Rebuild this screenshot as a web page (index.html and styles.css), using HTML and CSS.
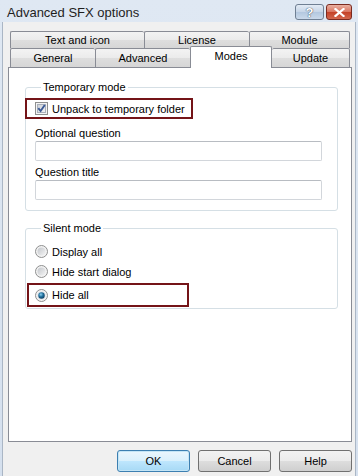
FILE: index.html
```html
<!DOCTYPE html>
<html lang="en">
<head>
    <meta charset="UTF-8">
    <title>Advanced SFX options</title>
    <link rel="stylesheet" href="styles.css">
</head>
<body>
    <div class="window">
        <div class="titlebar">
            <span class="title">Advanced SFX options</span>
            <div class="caption-buttons">
                <span class="cap cap-help">?</span>
                <span class="cap cap-close">
                    <svg width="11" height="9" viewBox="0 0 11 9"><path d="M1.5 1 L9.5 8 M9.5 1 L1.5 8" stroke="#fff" stroke-width="2.2" stroke-linecap="square"/></svg>
                </span>
            </div>
        </div>
        <div class="client">
            <div class="tabs">
                <div class="tab-row">
                    <span class="tab tab-text">Text and icon</span>
                    <span class="tab tab-license">License</span>
                    <span class="tab tab-module last">Module</span>
                </div>
                <div class="tab-row front">
                    <span class="tab tab-general">General</span>
                    <span class="tab tab-advanced">Advanced</span>
                    <span class="tab tab-modes active">Modes</span>
                    <span class="tab tab-update last">Update</span>
                </div>
            </div>
            <div class="panel">
                <fieldset class="group group-temp">
                    <legend>Temporary mode</legend>
                    <div class="mark mark-check">
                        <svg class="checkbox" width="13" height="13" viewBox="0 0 13 13">
                            <defs>
                                <linearGradient id="cbg" x1="0" y1="0" x2="1" y2="1">
                                    <stop offset="0" stop-color="#cbcfd5"/>
                                    <stop offset="1" stop-color="#f6f6f6"/>
                                </linearGradient>
                            </defs>
                            <rect x="0.5" y="0.5" width="12" height="12" fill="#f4f4f4" stroke="#8e8f8f"/>
                            <rect x="2.5" y="2.5" width="8" height="8" fill="url(#cbg)" stroke="#a9b0bb"/>
                            <path d="M3.3 6.2 L5.6 9 L9.8 3" fill="none" stroke="#3b5a96" stroke-width="1.9"/>
                        </svg>
                        <span>Unpack to temporary folder</span>
                    </div>
                    <label class="field-label">Optional question</label>
                    <input class="field" type="text">
                    <label class="field-label">Question title</label>
                    <input class="field" type="text">
                </fieldset>

                <fieldset class="group group-silent">
                    <legend>Silent mode</legend>
                    <div class="option">
                        <svg class="radio" width="13" height="13" viewBox="0 0 13 13">
                            <defs>
                                <linearGradient id="rbg" x1="0" y1="0" x2="1" y2="1">
                                    <stop offset="0" stop-color="#c3c6cb"/>
                                    <stop offset="1" stop-color="#f4f4f4"/>
                                </linearGradient>
                            </defs>
                            <circle cx="6.5" cy="6.5" r="6" fill="#f2f2f2" stroke="#8e8f8f"/>
                            <circle cx="6.5" cy="6.5" r="4" fill="url(#rbg)"/>
                        </svg>
                        <span>Display all</span>
                    </div>
                    <div class="option">
                        <svg class="radio" width="13" height="13" viewBox="0 0 13 13">
                            <circle cx="6.5" cy="6.5" r="6" fill="#f2f2f2" stroke="#8e8f8f"/>
                            <circle cx="6.5" cy="6.5" r="4" fill="url(#rbg)"/>
                        </svg>
                        <span>Hide start dialog</span>
                    </div>
                    <div class="option mark mark-radio">
                        <svg class="radio" width="13" height="13" viewBox="0 0 13 13">
                            <defs>
                                <radialGradient id="rdot" cx="0.4" cy="0.35" r="0.7">
                                    <stop offset="0" stop-color="#8fd0f0"/>
                                    <stop offset="0.5" stop-color="#1f6f9c"/>
                                    <stop offset="1" stop-color="#0d3a5c"/>
                                </radialGradient>
                            </defs>
                            <circle cx="6.5" cy="6.5" r="6" fill="#f2f2f2" stroke="#8e8f8f"/>
                            <circle cx="6.5" cy="6.5" r="4" fill="#dde2e8"/>
                            <circle cx="6.5" cy="6.5" r="3.2" fill="url(#rdot)"/>
                        </svg>
                        <span>Hide all</span>
                    </div>
                </fieldset>
            </div>
            <div class="buttons">
                <button class="btn default">OK</button>
                <button class="btn">Cancel</button>
                <button class="btn">Help</button>
            </div>
        </div>
    </div>
</body>
</html>
```

FILE: styles.css
```css
body {
    margin: 0;
    padding: 0;
    font-family: "Liberation Sans", Arial, sans-serif;
    font-size: 11px;
    color: #000;
    background: #f0f0f0;
}
.window {
    width: 358px;
    height: 476px;
    background: linear-gradient(#dfe8f3, #d5e0ee);
    display: flex;
    flex-direction: column;
    overflow: hidden;
}
.titlebar {
    height: 22px;
    flex-shrink: 0;
    display: flex;
    justify-content: space-between;
    align-items: flex-start;
    padding: 0 6px 0 7px;
}
.title {
    font-size: 13px;
    line-height: 25px;
    color: #1e1e1e;
}
.caption-buttons {
    display: flex;
    gap: 2px;
    margin-top: 4px;
}
.cap {
    height: 16px;
    box-sizing: border-box;
    border: 1px solid #6f7f93;
    border-radius: 3px;
    display: flex;
    align-items: center;
    justify-content: center;
}
.cap-help {
    width: 29px;
    background: linear-gradient(#e3ebf5 0%, #c6d5e7 50%, #b3c7df 51%, #cad9ea 100%);
    color: #fff;
    font-weight: bold;
    font-size: 13px;
    text-shadow: 0 0 1px #3b4a5c, 0 0 1px #3b4a5c;
}
.cap-close {
    width: 26px;
    border-color: #7a2a20;
    background: linear-gradient(#eab0a2 0%, #d9745f 50%, #c44127 51%, #d2684f 100%);
}
.client {
    flex: 1;
    margin: 0 2px;
    border-left: 1px solid #aab6c5;
    border-right: 1px solid #aab6c5;
    background: #f0f0f0;
    padding: 9px 3px 0 5px;
}
.tabs {
    padding-left: 2px;
}
.tab-row {
    display: flex;
    height: 17px;
}
.tab-row.front {
    height: 19px;
}
.tab {
    box-sizing: border-box;
    border: 1px solid #898c95;
    border-bottom: none;
    border-right: none;
    border-radius: 2px 2px 0 0;
    background: linear-gradient(#f3f3f3 0%, #ebebeb 50%, #dedede 51%, #d6d6d6 100%);
    text-align: center;
    line-height: 16px;
    white-space: nowrap;
}
.tab.last {
    border-right: 1px solid #898c95;
}
.front .tab {
    line-height: 19px;
}
.tab-text { width: 134px; }
.tab-license { width: 105px; }
.tab-module { width: 101px; }
.tab-general { width: 85px; }
.tab-advanced { width: 95px; }
.tab-modes { width: 82px; }
.tab-update { width: 78px; }
.tab.active {
    position: relative;
    z-index: 1;
    height: 22px;
    margin-top: -2px;
    background: #fff;
    border-right: 1px solid #898c95;
    line-height: 19px;
}
.tab.active + .tab {
    border-left: none;
}
.panel {
    box-sizing: border-box;
    height: 375px;
    border: 1px solid #898c95;
    background: #fff;
    padding: 12px 13px 0 16px;
}
.group {
    margin: 0;
    border: 1px solid #d5dfe5;
    border-radius: 3px;
    min-width: 0;
}
.group legend {
    padding: 0 2px;
    margin-left: 6px;
    line-height: 14px;
}
.group-temp {
    padding: 4px 15px 10px 9px;
}
.group-silent {
    margin-top: 10px;
    padding: 8px 15px 1px 9px;
}
.mark {
    display: flex;
    align-items: center;
    border: 2px solid #741418;
    box-sizing: border-box;
    white-space: nowrap;
}
.mark-check {
    width: 168px;
    height: 21px;
    margin-left: -10px;
    padding-left: 8px;
}
.checkbox, .radio {
    flex-shrink: 0;
    margin-right: 4px;
}
.field-label {
    display: block;
    line-height: 14px;
    margin-top: 7px;
}
.field-label + .field {
    margin-top: 1px;
}
.field + .field-label {
    margin-top: 4px;
}
.field {
    display: block;
    box-sizing: border-box;
    width: 287px;
    height: 20px;
    margin: 0;
    border: 1px solid #d2d6db;
    border-top-color: #b8bcc2;
    border-radius: 2px;
    background: #fff;
}
.option {
    display: flex;
    align-items: center;
    height: 17px;
    margin-bottom: 3px;
}
.mark-radio {
    width: 162px;
    height: 24px;
    margin: 0 0 0 -8px;
    padding-left: 6px;
}
.buttons {
    display: flex;
    justify-content: flex-end;
    gap: 8px;
    margin-top: 8px;
}
.btn {
    width: 73px;
    height: 22px;
    font-family: "Liberation Sans", Arial, sans-serif;
    font-size: 11px;
    color: #000;
    border: 1px solid #707070;
    border-radius: 3px;
    background: linear-gradient(#f2f2f2 0%, #ebebeb 50%, #dddddd 51%, #cfcfcf 100%);
    padding: 0;
}
.btn.default {
    border-color: #3c7fb1;
    background: linear-gradient(#eaf6fd 0%, #d9f0fc 50%, #bee6fd 51%, #a7d9f5 100%);
    box-shadow: inset 0 0 0 1px #c4e5f6;
}
```
